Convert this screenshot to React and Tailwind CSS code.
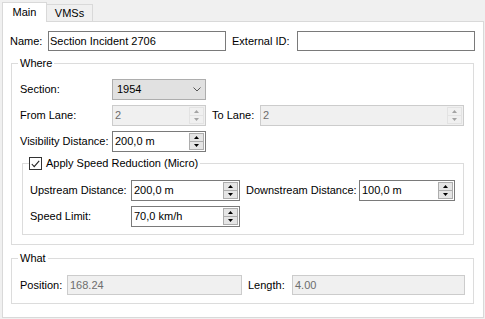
import React from 'react';

const Arrow = ({ up, color }) => (
  <svg width="5" height="3" viewBox="0 0 5 3">
    {up ? <path d="M0 3 L2.5 0 L5 3 Z" fill={color} /> : <path d="M0 0 L5 0 L2.5 3 Z" fill={color} />}
  </svg>
);

const SpinBox = ({ width, value, disabled }) => (
  <div
    className={`flex h-[21px] border ${width} ${
      disabled ? 'border-[#cccccc] bg-[#f0f0f0] text-[#6d6d6d]' : 'border-[#7a7a7a] bg-white text-black'
    }`}
  >
    <div className="flex-1 flex items-center pl-[2px] leading-none">{value}</div>
    <div className="w-[15px] my-[1px] mr-[1px] flex flex-col">
      <div
        className={`flex-1 flex items-center justify-center border ${
          disabled ? 'border-[#e3e3e3] bg-[#f0f0f0]' : 'border-[#adadad] bg-[#e5e5e5]'
        }`}
      >
        <Arrow up color={disabled ? '#a3a3a3' : '#000'} />
      </div>
      <div
        className={`flex-1 flex items-center justify-center border border-t-0 ${
          disabled ? 'border-[#e3e3e3] bg-[#f0f0f0]' : 'border-[#adadad] bg-[#e5e5e5]'
        }`}
      >
        <Arrow color={disabled ? '#a3a3a3' : '#000'} />
      </div>
    </div>
  </div>
);

const TextBox = ({ width, value, disabled }) => (
  <div
    className={`flex items-center h-[20px] border pl-[1px] ${width} ${
      disabled ? 'border-[#cccccc] bg-[#f0f0f0] text-[#6d6d6d] pl-[2px]' : 'border-[#7a7a7a] bg-white text-black'
    }`}
  >
    {value}
  </div>
);

const GroupBox = ({ title, className, children }) => (
  <div className={`relative border border-[#dcdcdc] ${className}`}>
    <span className="absolute left-[6px] top-[-8px] px-[2px] bg-white leading-[14px]">{title}</span>
    {children}
  </div>
);

export default function App() {
  return (
    <div className="w-[485px] h-[319px] bg-[#f0f0f0] text-[11px] text-black font-['Liberation_Sans',Arial,sans-serif] overflow-hidden">
      {/* tabs */}
      <div className="flex items-end pl-[2px] h-[21px]">
        <div className="relative z-10 -mb-[1px] h-[20px] w-[45px] bg-white border border-b-0 border-[#d9d9d9] flex items-center justify-center">
          Main
        </div>
        <div className="-ml-px h-[17px] w-[47px] bg-[#f0f0f0] border border-b-0 border-[#d9d9d9] flex items-center justify-center">
          VMSs
        </div>
      </div>

      {/* pane */}
      <div className="ml-[2px] w-[482px] h-[297px] bg-white border border-[#d9d9d9] pt-[9px] pl-[7px]">
        <div className="flex items-center h-[20px]">
          <span className="w-[38px]">Name:</span>
          <TextBox width="w-[178px]" value="Section Incident 2706" />
          <span className="ml-[6px] w-[65px]">External ID:</span>
          <TextBox width="w-[178px]" value="" />
        </div>

        <GroupBox title="Where" className="mt-[12px] ml-[1px] w-[463px] h-[182px] pt-[15px] pl-[8px]">
          <div className="flex flex-col gap-[5px]">
            <div className="flex items-center h-[21px]">
              <span className="w-[92px]">Section:</span>
              <div className="w-[94px] h-[21px] flex items-center justify-between border border-[#adadad] bg-[#e1e1e1] pl-[4px] pr-[4px]">
                <span>1954</span>
                <svg width="8" height="5" viewBox="0 0 8 5">
                  <path d="M0.5 0.5 L4 4 L7.5 0.5" fill="none" stroke="#555" strokeWidth="1" />
                </svg>
              </div>
            </div>
            <div className="flex items-center h-[21px]">
              <span className="w-[92px]">From Lane:</span>
              <SpinBox width="w-[94px]" value="2" disabled />
              <span className="ml-[6px] w-[48px]">To Lane:</span>
              <SpinBox width="w-[204px]" value="2" disabled />
            </div>
            <div className="flex items-center h-[21px]">
              <span className="w-[92px]">Visibility Distance:</span>
              <SpinBox width="w-[94px]" value="200,0 m" />
            </div>
          </div>

          <div className="relative mt-[11px] ml-[2px] w-[442px] h-[72px] border border-[#dcdcdc] pt-[16px] pl-[7px]">
            <div className="absolute left-[6px] top-[-7px] h-[13px] flex items-center gap-[4px] bg-white pr-[2px]">
              <div className="w-[13px] h-[13px] border border-[#333333] bg-white flex items-center justify-center">
                <svg width="9" height="8" viewBox="0 0 9 8">
                  <path d="M0.8 4 L3.2 6.6 L8.2 0.8" fill="none" stroke="#222" strokeWidth="1.1" />
                </svg>
              </div>
              <span className="leading-none">Apply Speed Reduction (Micro)</span>
            </div>
            <div className="flex flex-col gap-[5px]">
              <div className="flex items-center h-[21px]">
                <span className="w-[101px]">Upstream Distance:</span>
                <SpinBox width="w-[109px]" value="200,0 m" />
                <span className="ml-[6px] w-[113px]">Downstream Distance:</span>
                <SpinBox width="w-[96px]" value="100,0 m" />
              </div>
              <div className="flex items-center h-[21px]">
                <span className="w-[101px]">Speed Limit:</span>
                <SpinBox width="w-[109px]" value="70,0 km/h" />
              </div>
            </div>
          </div>
        </GroupBox>

        <GroupBox title="What" className="mt-[13px] ml-[1px] w-[463px] h-[46px] pt-[16px] pl-[8px]">
          <div className="flex items-center h-[20px]">
            <span className="w-[47px]">Position:</span>
            <TextBox width="w-[175px]" value="168.24" disabled />
            <span className="ml-[6px] w-[44px]">Length:</span>
            <TextBox width="w-[173px]" value="4.00" disabled />
          </div>
        </GroupBox>
      </div>
    </div>
  );
}
